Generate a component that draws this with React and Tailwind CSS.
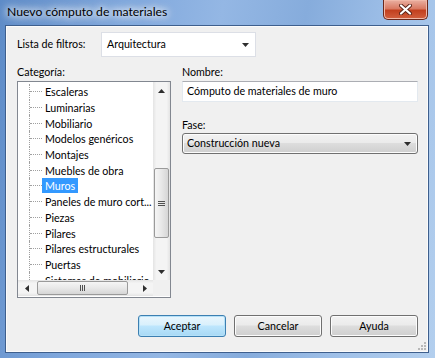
import React from 'react';

const items = [
  'Escaleras',
  'Luminarias',
  'Mobiliario',
  'Modelos genéricos',
  'Montajes',
  'Muebles de obra',
  'Muros',
  'Paneles de muro cort...',
  'Piezas',
  'Pilares',
  'Pilares estructurales',
  'Puertas',
  'Sistemas de mobiliario',
];

const Tri = ({ dir = 'down', className = '' }) => {
  const pts = {
    down: '0,0 7,0 3.5,4',
    up: '0,4 7,4 3.5,0',
    left: '4,0 4,7 0,3.5',
    right: '0,0 0,7 4,3.5',
  }[dir];
  const vertical = dir === 'up' || dir === 'down';
  return (
    <svg
      width={vertical ? 7 : 4}
      height={vertical ? 4 : 7}
      viewBox={vertical ? '0 0 7 4' : '0 0 4 7'}
      className={className}
    >
      <polygon points={pts} fill="#2e2e2e" />
    </svg>
  );
};

// one row of the category tree, with its dotted connector
const TreeRow = ({ label, selected }) => (
  <div className="flex h-[15.7px] items-stretch">
    <div className="ml-[11px] w-[13px] shrink-0 border-l border-dotted border-[#a0a0a0] flex items-center">
      <div className="w-full border-t border-dotted border-[#a0a0a0]" />
    </div>
    <div className="flex items-center shrink-0">
      <span
        className={`px-[3px] leading-[15px] whitespace-nowrap ${
          selected ? 'bg-[#3399ff] text-white' : 'text-black'
        }`}
      >
        {label}
      </span>
    </div>
  </div>
);

const WinButton = ({ label, isDefault }) => (
  <button
    className={`w-[88px] h-[22px] rounded-[3px] border text-[10.7px] text-black ${
      isDefault
        ? 'border-[#3c7fb1] bg-[linear-gradient(#eaf6fd,#d9f0fc_45%,#bee6fd_50%,#a7d9f5)] shadow-[inset_0_0_0_1px_#b5e1f8]'
        : 'border-[#707070] bg-[linear-gradient(#f2f2f2,#ebebeb_45%,#dddddd_50%,#cfcfcf)] shadow-[inset_0_0_0_1px_#fcfcfc]'
    }`}
  >
    {label}
  </button>
);

export default function App() {
  return (
    <div
      className="w-[435px] h-[358px] flex flex-col overflow-hidden bg-[linear-gradient(100deg,#5d8bc7_0%,#7fa7dc_25%,#94b7e4_45%,#86acdc_62%,#9fc0e8_80%,#b3cfee_100%)]"
      style={{ fontFamily: 'Lato, "Noto Sans", sans-serif' }}
    >
      {/* Title bar */}
      <div className="h-[25px] flex justify-between items-start shrink-0">
        <div className="pl-[7px] pt-[3px] text-[12.2px] text-black [text-shadow:0_0_6px_#ffffff,0_0_10px_#ffffff,0_0_14px_#ffffff]">
          Nuevo cómputo de materiales
        </div>
        <div className="mr-[7px] w-[45px] h-[20px] rounded-b-[5px] border border-t-0 border-[#6a281c] bg-[linear-gradient(#eab0a2,#d97a63_45%,#c2401f_55%,#d2603f)] shadow-[inset_0_0_0_1px_#f0b8a8] flex items-center justify-center">
          <svg width="13" height="11" viewBox="0 0 13 11">
            <path d="M2 1.5 L11 9.5 M11 1.5 L2 9.5" stroke="#5a2318" strokeWidth="4" strokeLinecap="round" />
            <path d="M2 1.5 L11 9.5 M11 1.5 L2 9.5" stroke="#ffffff" strokeWidth="2.2" strokeLinecap="round" />
          </svg>
        </div>
      </div>

      {/* Client area */}
      <div className="ml-[5px] w-[424px] h-[328px] border border-[#3e5f8d] bg-[#f0f0f0] text-[10.7px] text-black flex flex-col relative">
        <div className="flex-1 flex flex-col border border-[#fbfbfb] pt-[5px] pl-[10px] pr-[9px]">
          {/* Filter row */}
          <div className="flex items-center h-[25px]">
            <div className="w-[84px]">Lista de filtros:</div>
            <div className="w-[155px] h-[25px] bg-white border border-[#dcdfe6] flex items-center justify-between pl-[5px] pr-[6px]">
              <span>Arquitectura</span>
              <Tri dir="down" />
            </div>
          </div>

          <div className="flex mt-[7px] gap-[11px]">
            {/* Category list */}
            <div className="w-[154px] flex flex-col">
              <div className="h-[16px] flex items-center">Categoría:</div>
              <div className="mt-[1px] h-[217px] border border-[#828790] bg-white grid grid-cols-[135px_17px] grid-rows-[198px_16px]">
                <div className="overflow-hidden pt-[2px] min-w-0">
                  {items.map((it) => (
                    <TreeRow key={it} label={it} selected={it === 'Muros'} />
                  ))}
                </div>
                {/* vertical scrollbar */}
                <div className="flex flex-col bg-[linear-gradient(90deg,#e4e4e4,#f4f4f4_20%,#f4f4f4_80%,#e4e4e4)]">
                  <div className="h-[17px] flex items-center justify-center">
                    <Tri dir="up" />
                  </div>
                  <div className="flex-1 flex flex-col">
                    <div className="mt-[69px] mx-[1px] h-[70px] rounded-[2px] border border-[#9a9a9a] bg-[linear-gradient(90deg,#f5f5f5,#e8e8e8_50%,#d6d6d6)] flex flex-col items-center justify-center gap-[1px]">
                      <div className="w-[7px] h-px bg-[#505050]" />
                      <div className="w-[7px] h-px bg-[#505050]" />
                      <div className="w-[7px] h-px bg-[#505050]" />
                    </div>
                  </div>
                  <div className="h-[17px] flex items-center justify-center">
                    <Tri dir="down" />
                  </div>
                </div>
                {/* horizontal scrollbar */}
                <div className="flex bg-[linear-gradient(#e4e4e4,#f4f4f4_20%,#f4f4f4_80%,#e4e4e4)]">
                  <div className="w-[17px] flex items-center justify-center">
                    <Tri dir="left" />
                  </div>
                  <div className="flex-1 flex items-stretch py-[1px]">
                    <div className="ml-[2px] w-[91px] rounded-[2px] border border-[#9a9a9a] bg-[linear-gradient(#f5f5f5,#e8e8e8_50%,#d6d6d6)] flex items-center justify-center gap-[1px]">
                      <div className="w-px h-[6px] bg-[#505050]" />
                      <div className="w-px h-[6px] bg-[#505050]" />
                      <div className="w-px h-[6px] bg-[#505050]" />
                    </div>
                  </div>
                  <div className="w-[17px] flex items-center justify-center">
                    <Tri dir="right" />
                  </div>
                </div>
                <div className="bg-[#f0f0f0]" />
              </div>
            </div>

            {/* Name and phase */}
            <div className="w-[236px] flex flex-col">
              <div className="h-[16px] flex items-center">Nombre:</div>
              <div className="mt-[1px] h-[21px] bg-white border border-[#e3e9ef] border-t-[#abadb3] flex items-center pl-[4px]">
                Cómputo de materiales de muro
              </div>
              <div className="mt-[15px] h-[16px] flex items-center">Fase:</div>
              <div className="h-[21px] rounded-[3px] border border-[#707070] bg-[linear-gradient(#f2f2f2,#ebebeb_45%,#dddddd_50%,#cfcfcf)] shadow-[inset_0_0_0_1px_#fcfcfc] flex items-center justify-between pl-[4px] pr-[6px]">
                <span>Construcción nueva</span>
                <Tri dir="down" />
              </div>
            </div>
          </div>

          {/* Buttons */}
          <div className="mt-[17px] flex justify-end gap-[8px]">
            <WinButton label="Aceptar" isDefault />
            <WinButton label="Cancelar" />
            <WinButton label="Ayuda" />
          </div>
        </div>

        {/* resize grip */}
        <div className="absolute right-[2px] bottom-[2px] grid grid-cols-3 gap-[1px]">
          <span />
          <span />
          <span className="w-[2px] h-[2px] bg-[#b8b8b8]" />
          <span />
          <span className="w-[2px] h-[2px] bg-[#b8b8b8]" />
          <span className="w-[2px] h-[2px] bg-[#b8b8b8]" />
          <span className="w-[2px] h-[2px] bg-[#b8b8b8]" />
          <span className="w-[2px] h-[2px] bg-[#b8b8b8]" />
          <span className="w-[2px] h-[2px] bg-[#b8b8b8]" />
        </div>
      </div>
    </div>
  );
}
